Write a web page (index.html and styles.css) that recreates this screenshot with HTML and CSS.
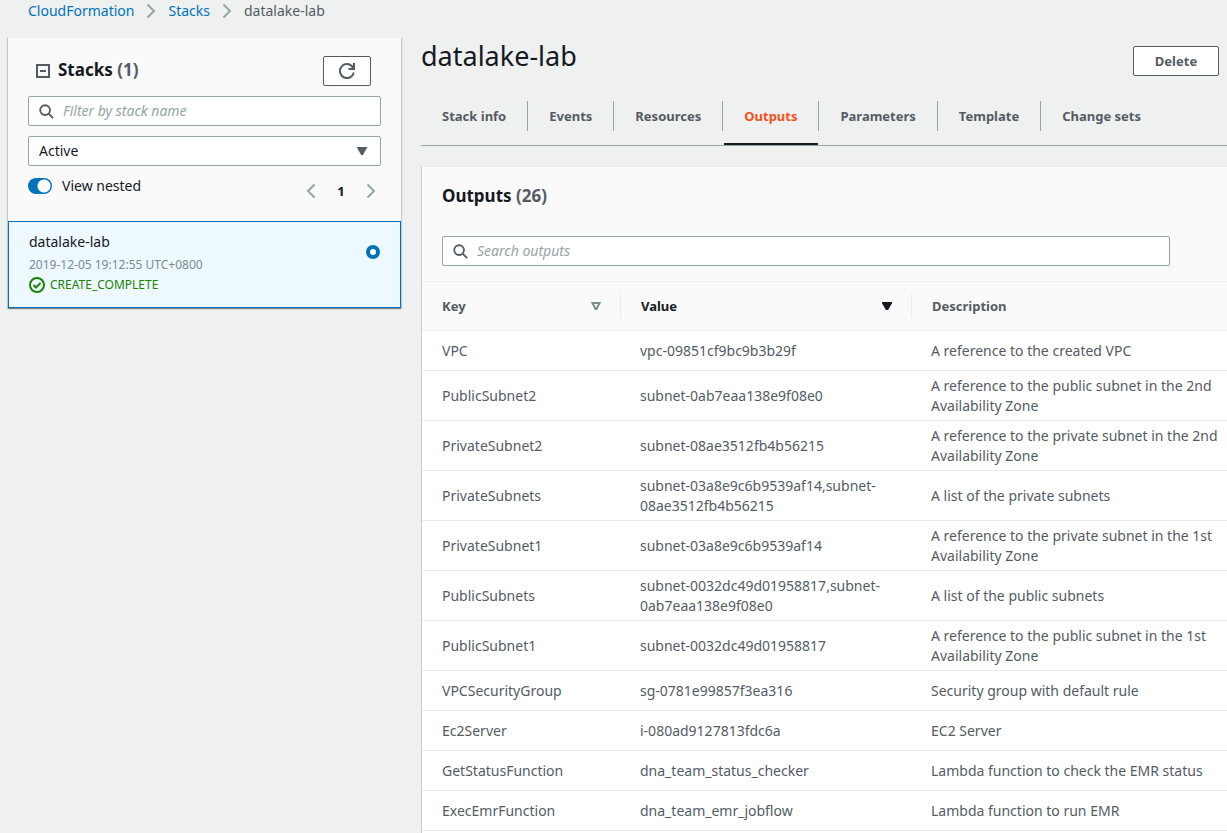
FILE: index.html
```html
<!DOCTYPE html>
<html lang="en">
<head>
<meta charset="utf-8">
<title>CloudFormation - Stack datalake-lab</title>
<link rel="stylesheet" href="styles.css">
</head>
<body>
<nav class="breadcrumb" aria-label="Breadcrumb">
  <a href="#">CloudFormation</a>
  <svg class="crumb-arrow" viewBox="0 0 10 16" aria-hidden="true"><path d="M1.500 1.500 8 8l-6.500 6.500"/></svg>
  <a href="#">Stacks</a>
  <svg class="crumb-arrow" viewBox="0 0 10 16" aria-hidden="true"><path d="M1.500 1.500 8 8l-6.500 6.500"/></svg>
  <span>datalake-lab</span>
</nav>
<div class="layout">
  <aside class="stacks">
    <div class="stacks-top">
      <div class="stacks-head">
        <button class="collapse" aria-label="Collapse stacks"><svg viewBox="0 0 14 14"><path d="M1 1h12v12H1zM4 7h6"/></svg></button>
        <h2>Stacks <span>(1)</span></h2>
        <button class="btn refresh" aria-label="Refresh"><svg viewBox="0 0 16 16"><path d="M14.800 9.500A7 7 0 1 1 12.800 3L14.500 5M15 0v6H9.500"/></svg></button>
      </div>
      <label class="search">
        <svg viewBox="0 0 16 16" aria-hidden="true"><circle cx="6.500" cy="6.500" r="5.200"/><path d="m10.300 10.300 4.700 4.700"/></svg>
        <input type="text" placeholder="Filter by stack name" aria-label="Filter by stack name">
      </label>
      <div class="select">
        <select aria-label="Stack status"><option>Active</option></select>
        <svg viewBox="0 0 12 10" aria-hidden="true"><path d="M0 0h12L7 9H5z"/></svg>
      </div>
      <div class="stacks-tools">
        <label class="toggle"><input type="checkbox" checked>View nested</label>
        <div class="pager">
          <button aria-label="Previous page"><svg viewBox="0 0 10 16"><path d="M8.500 1.500 2 8l6.500 6.500"/></svg></button>
          <button class="page">1</button>
          <button aria-label="Next page"><svg viewBox="0 0 10 16"><path d="M1.500 1.500 8 8l-6.500 6.500"/></svg></button>
        </div>
      </div>
    </div>
    <label class="stack">
      <span class="stack-text">
        <span class="stack-name">datalake-lab</span>
        <span class="stack-date">2019-12-05 19:12:55 UTC+0800</span>
        <span class="stack-status"><svg viewBox="0 0 16 16" aria-hidden="true"><circle cx="8" cy="8" r="7"/><path d="m4.500 8 2.500 2.500L11.500 6"/></svg>CREATE_COMPLETE</span>
      </span>
      <input type="radio" name="stack" checked>
    </label>
  </aside>
  <main class="detail">
    <header class="detail-head">
      <h1>datalake-lab</h1>
      <button class="btn delete">Delete</button>
    </header>
    <div class="tabs" role="tablist">
      <button role="tab">Stack info</button>
      <button role="tab">Events</button>
      <button role="tab">Resources</button>
      <button role="tab" class="active" aria-selected="true">Outputs</button>
      <button role="tab">Parameters</button>
      <button role="tab">Template</button>
      <button role="tab">Change sets</button>
    </div>
    <section class="outputs">
      <div class="outputs-head">
        <h2>Outputs <span>(26)</span></h2>
        <label class="search">
          <svg viewBox="0 0 16 16" aria-hidden="true"><circle cx="6.500" cy="6.500" r="5.200"/><path d="m10.300 10.300 4.700 4.700"/></svg>
          <input type="text" placeholder="Search outputs" aria-label="Search outputs">
        </label>
      </div>
      <table>
        <colgroup><col class="col-key"><col class="col-value"><col></colgroup>
        <thead>
          <tr>
            <th><div class="th">Key<svg class="sort" viewBox="0 0 10 8" aria-hidden="true"><path d="M1.500 1h7L5.500 7h-1z"/></svg></div></th>
            <th class="sorted"><div class="th">Value<svg class="sort" viewBox="0 0 10 8" aria-hidden="true"><path d="M1 1h8L5.500 7h-1z"/></svg></div></th>
            <th><div class="th">Description</div></th>
          </tr>
        </thead>
        <tbody>
          <tr><td>VPC</td><td>vpc-09851cf9bc9b3b29f</td><td>A reference to the created VPC</td></tr>
          <tr><td>PublicSubnet2</td><td>subnet-0ab7eaa138e9f08e0</td><td>A reference to the public subnet in the 2nd Availability Zone</td></tr>
          <tr><td>PrivateSubnet2</td><td>subnet-08ae3512fb4b56215</td><td>A reference to the private subnet in the 2nd Availability Zone</td></tr>
          <tr><td>PrivateSubnets</td><td>subnet-03a8e9c6b9539af14,subnet-<wbr>08ae3512fb4b56215</td><td>A list of the private subnets</td></tr>
          <tr><td>PrivateSubnet1</td><td>subnet-03a8e9c6b9539af14</td><td>A reference to the private subnet in the 1st Availability Zone</td></tr>
          <tr><td>PublicSubnets</td><td>subnet-0032dc49d01958817,subnet-<wbr>0ab7eaa138e9f08e0</td><td>A list of the public subnets</td></tr>
          <tr><td>PublicSubnet1</td><td>subnet-0032dc49d01958817</td><td>A reference to the public subnet in the 1st Availability Zone</td></tr>
          <tr><td>VPCSecurityGroup</td><td>sg-0781e99857f3ea316</td><td>Security group with default rule</td></tr>
          <tr><td>Ec2Server</td><td>i-080ad9127813fdc6a</td><td>EC2 Server</td></tr>
          <tr><td>GetStatusFunction</td><td>dna_team_status_checker</td><td>Lambda function to check the EMR status</td></tr>
          <tr><td>ExecEmrFunction</td><td>dna_team_emr_jobflow</td><td>Lambda function to run EMR</td></tr>
        </tbody>
      </table>
    </section>
  </main>
</div>
</body>
</html>
```

FILE: styles.css
```css
* { box-sizing: border-box; }

body {
  margin: 0;
  min-height: 100vh;
  display: flex;
  flex-direction: column;
  background: #eff1f0;
  color: #16191f;
  font: 14px/20px "Noto Sans", "Open Sans", sans-serif;
}

button, input, select { font: inherit; color: inherit; }
button { cursor: pointer; }
h1, h2 { margin: 0; }
h2 { font-size: 17px; line-height: 24px; font-weight: 700; }
h2 span { color: #545b64; }
svg { display: block; flex: none; fill: none; stroke: #545b64; stroke-width: 2; }

.breadcrumb {
  display: flex;
  align-items: center;
  gap: 12px;
  height: 22px;
  padding-left: 28px;
  color: #545b64;
}
.breadcrumb a { color: #0073bb; text-decoration: none; }
.crumb-arrow { width: 10px; height: 16px; stroke: #95a5a6; }

.layout { flex: 1; display: flex; gap: 20px; padding-left: 8px; }

.btn {
  height: 30px;
  display: flex;
  align-items: center;
  justify-content: center;
  background: #fff;
  border: 1px solid #545b64;
  border-radius: 2px;
  color: #545b64;
  font-size: 13px;
  font-weight: 700;
}

.stacks {
  flex: 0 0 393px;
  align-self: flex-start;
  margin-top: 15px;
  background: #fafafa;
  border-top: 1px solid #eaeded;
  box-shadow: 0 1px 1px #001c244d, 1px 1px 1px #001c2426, -1px 1px 1px #001c2426;
}
.stacks-top { padding: 18px 20px; }
.stacks-head { display: flex; align-items: center; padding: 0 10px 0 8px; margin-bottom: 10px; }
.stacks-head h2 { flex: 1; padding-bottom: 2px; }
.collapse { padding: 0; margin-right: 8px; border: 0; background: none; }
.collapse svg { width: 14px; height: 14px; }
.refresh { width: 48px; padding: 0; }
.refresh svg { width: 16px; height: 16px; }

.search {
  display: flex;
  align-items: center;
  gap: 9px;
  height: 30px;
  padding: 0 10px;
  background: #fff;
  border: 1px solid #95a5a6;
  border-radius: 2px;
}
.search svg { width: 15px; height: 15px; }
.search input { flex: 1; min-width: 0; padding: 0; border: 0; outline: 0; background: none; }
.search input::placeholder { color: #95a5a6; font-style: italic; opacity: 1; }

.select { display: grid; align-items: center; margin-top: 10px; }
.select select {
  grid-area: 1 / 1;
  width: 100%;
  height: 30px;
  padding: 0 10px;
  appearance: none;
  background: #fff;
  border: 1px solid #95a5a6;
  border-radius: 2px;
}
.select svg {
  grid-area: 1 / 1;
  justify-self: end;
  width: 12px;
  height: 9px;
  margin-right: 13px;
  fill: #545b64;
  stroke: none;
  pointer-events: none;
}

.stacks-tools { display: flex; justify-content: space-between; align-items: flex-start; padding: 10px 0 2px; }
.toggle { display: flex; align-items: center; gap: 10px; }
.toggle input {
  appearance: none;
  width: 24px;
  height: 16px;
  margin: 0;
  border-radius: 8px;
  background: radial-gradient(circle at 16px 8px, #fff 6px, #0073bb 7px);
}
.pager { display: flex; align-items: center; gap: 16px; padding: 5px 4px 0 0; }
.pager button { min-width: 12px; padding: 0; border: 0; background: none; }
.pager svg { width: 10px; height: 16px; margin: 0 auto; stroke: #95a5a6; }
.pager .page { min-width: 16px; font-size: 13px; font-weight: 700; }

.stack {
  display: flex;
  align-items: flex-start;
  justify-content: space-between;
  height: 87px;
  padding: 8px 20px;
  background: #edf8ff;
  border: 1px solid #0073bb;
}
.stack-text { display: flex; flex-direction: column; font-size: 12px; }
.stack-name { font-size: 14px; line-height: 24px; }
.stack-date { line-height: 22px; color: #7f8c8d; }
.stack-status { display: flex; align-items: center; gap: 5px; line-height: 18px; color: #1d8102; }
.stack-status svg { width: 16px; height: 16px; stroke: #1d8102; }
.stack input {
  appearance: none;
  width: 14px;
  height: 14px;
  margin: 15px 0 0;
  border: 4px solid #0073bb;
  border-radius: 50%;
  background: #fff;
}

.detail { flex: 1; min-width: 0; display: flex; flex-direction: column; }
.detail-head {
  display: flex;
  align-items: flex-start;
  justify-content: space-between;
  padding: 16px 8px 0 0;
}
h1 { font-size: 27px; line-height: 36px; font-weight: 400; }
.delete { width: 86px; margin-top: 8px; }

.tabs { display: flex; margin-top: 25px; border-bottom: 1px solid #95a5a6; }
.tabs button {
  display: flex;
  flex-direction: column;
  height: 44px;
  padding: 0 21px;
  border: 0;
  background: none;
  color: #545b64;
  font-size: 13px;
  font-weight: 700;
  line-height: 30px;
  white-space: nowrap;
}
.tabs button + button { background: linear-gradient(#95a5a6, #95a5a6) 0 0 / 1px 30px no-repeat; padding-left: 22px; }
.tabs .active { color: #f4511e; }
.tabs .active::after { content: ""; align-self: stretch; height: 2px; margin: 12px -21px 0 -20px; background: #16191f; }

.outputs {
  flex: 1;
  margin-top: 20px;
  background: #fff;
  border-top: 1px solid #eaeded;
  border-left: 1px solid #c5cbcc;
}
.outputs-head { padding: 17px 57px 15px 20px; background: #fafafa; border-bottom: 1px solid #eaeded; }
.outputs-head h2 { margin-bottom: 28px; }

table { width: 100%; table-layout: fixed; border-collapse: separate; border-spacing: 0; color: #545b64; }
.col-key { width: 198px; }
.col-value { width: 291px; }
th {
  height: 49px;
  padding: 0;
  background: #fafafa;
  border-bottom: 1px solid #eaeded;
  font-size: 13px;
  text-align: left;
}
.th {
  display: flex;
  align-items: center;
  justify-content: space-between;
  height: 24px;
  padding: 0 19px 0 20px;
}
th + th .th { border-left: 1px solid #eaeded; }
.sorted { color: #16191f; }
.sort { width: 10px; height: 8px; stroke: #7f8c8d; }
.sorted .sort { fill: #16191f; stroke: #16191f; }
td { height: 40px; padding: 5px 20px 4px; border-bottom: 1px solid #eaeded; vertical-align: middle; }
td:last-child { padding-right: 8px; }
```
